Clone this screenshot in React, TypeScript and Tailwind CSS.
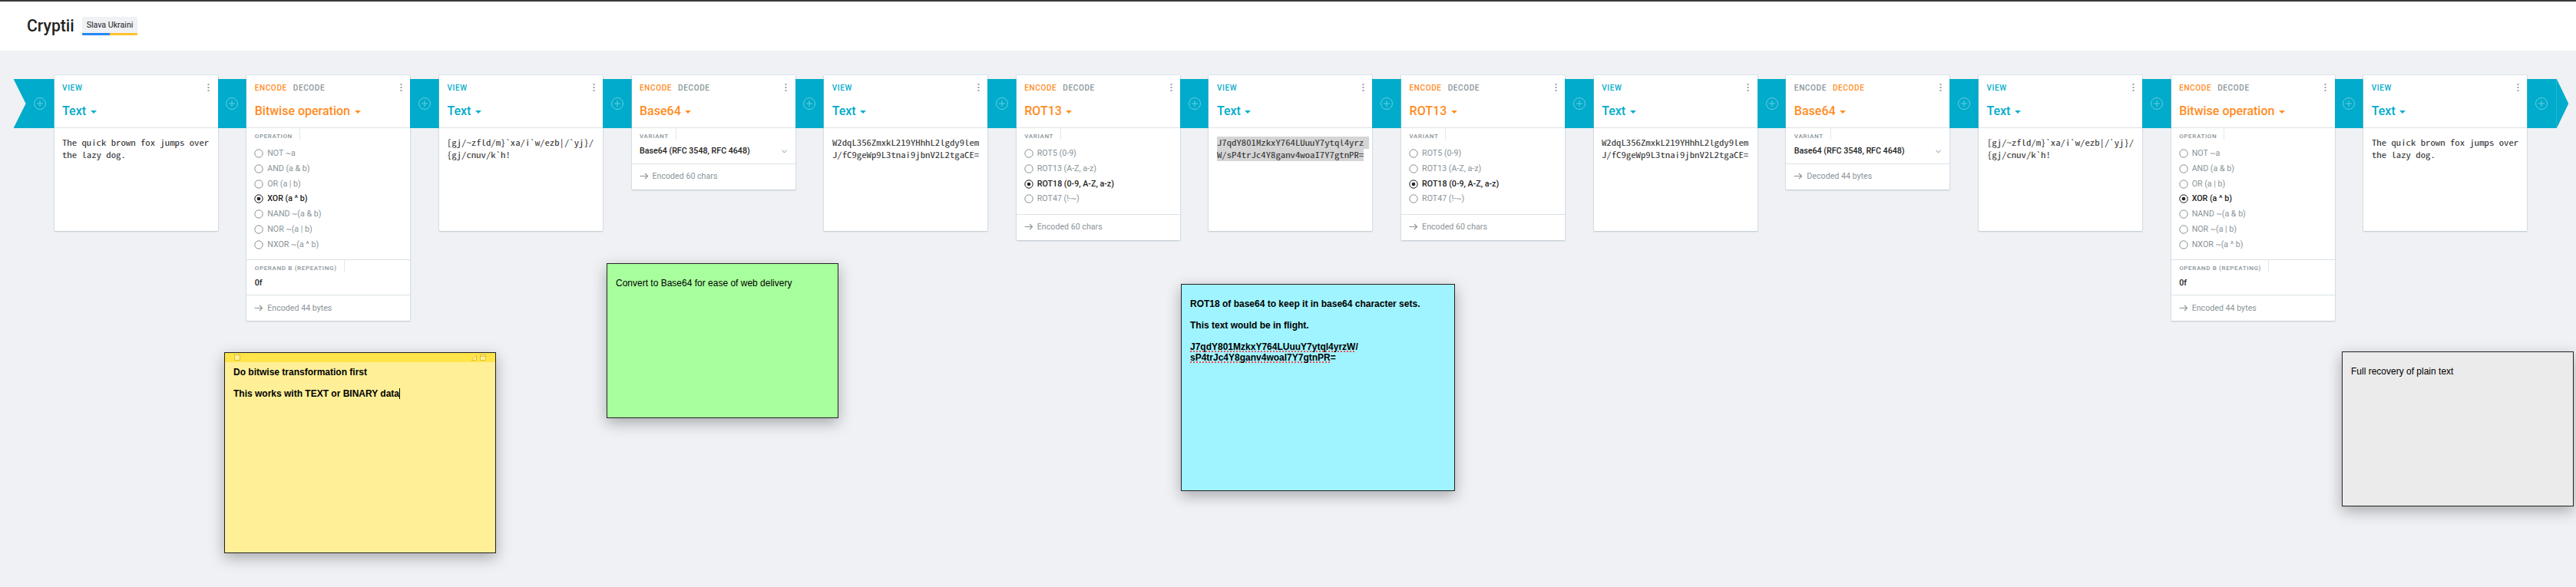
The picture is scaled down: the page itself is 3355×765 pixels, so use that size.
import React from 'react';

type View = { kind: 'view'; lines: string[]; selected?: boolean };
type Brick = {
  kind: 'brick';
  title: string;
  mode: 'ENCODE' | 'DECODE';
  label: string;
  options?: string[];
  active?: string;
  select?: string;
  operand?: string;
  status: string;
};

const bitwise: Brick = {
  kind: 'brick', title: 'Bitwise operation', mode: 'ENCODE', label: 'OPERATION',
  options: ['NOT ~a', 'AND (a & b)', 'OR (a | b)', 'XOR (a ^ b)', 'NAND ~(a & b)', 'NOR ~(a | b)', 'NXOR ~(a ^ b)'],
  active: 'XOR (a ^ b)', operand: '0f', status: 'Encoded 44 bytes',
};
const rot: Brick = {
  kind: 'brick', title: 'ROT13', mode: 'ENCODE', label: 'VARIANT',
  options: ['ROT5 (0-9)', 'ROT13 (A-Z, a-z)', 'ROT18 (0-9, A-Z, a-z)', 'ROT47 (!-~)'],
  active: 'ROT18 (0-9, A-Z, a-z)', status: 'Encoded 60 chars',
};
const base = (mode: 'ENCODE' | 'DECODE', status: string): Brick => ({
  kind: 'brick', title: 'Base64', mode, label: 'VARIANT', select: 'Base64 (RFC 3548, RFC 4648)', status,
});
const plain: View = { kind: 'view', lines: ['The quick brown fox jumps over', 'the lazy dog.'] };
const xored: View = { kind: 'view', lines: ['[gj/~zfld/m}`xa/i`w/ezb|/`yj}/', '{gj/cnuv/k`h!'] };
const b64: View = { kind: 'view', lines: ['W2dqL356ZmxkL219YHhhL2lgdy9lem', 'J/fC9geWp9L3tnai9jbnV2L2tgaCE='] };
const rotated: View = { kind: 'view', lines: ['J7qdY801MzkxY764LUuuY7ytql4yrz', 'W/sP4trJc4Y8ganv4woaI7Y7gtnPR='], selected: true };

const pipe: (View | Brick)[] = [
  plain, bitwise, xored, base('ENCODE', 'Encoded 60 chars'), b64, rot, rotated, rot, b64,
  base('DECODE', 'Decoded 44 bytes'), xored, bitwise, plain,
];

function Plus() {
  return (
    <svg className="block h-4 w-4 shrink-0" viewBox="0 0 16 16" fill="none" stroke="#66cee1" strokeWidth="1">
      <circle cx="8" cy="8" r="7.5" />
      <path d="M8 4v8M4 8h8" />
    </svg>
  );
}

function Caret() {
  return (
    <svg className="mt-[2px] ml-[5.5px] block h-1 w-2" viewBox="0 0 8 4" fill="currentColor">
      <path d="M0.4 0.1h7.2L4 3.8z" stroke="currentColor" strokeWidth="0.4" strokeLinejoin="round" />
    </svg>
  );
}

function Header({ item }: { item: View | Brick }) {
  const brick = item.kind === 'brick';
  return (
    <div className="h-[69px] border-b border-[#dce2e6] pl-[10.5px]">
      <div className="flex h-8 items-center pr-[10.3px] text-[10px] font-medium tracking-[0.62px]">
        {item.kind === 'brick' ? (
          <>
            <span className={item.mode === 'ENCODE' ? 'text-[#ff8c1f]' : 'text-[#8a9499]'}>ENCODE</span>
            <span className={item.mode === 'DECODE' ? 'ml-2 text-[#ff8c1f]' : 'ml-2 text-[#8a9499]'}>DECODE</span>
          </>
        ) : (
          <span className="text-[#00abcb]">VIEW</span>
        )}
        <svg className="ml-auto block h-3 w-[3px]" viewBox="0 0 3 12" fill="#9aa2a7">
          <rect x="0.5" y="1" width="2" height="2" />
          <rect x="0.5" y="5" width="2" height="2" />
          <rect x="0.5" y="9" width="2" height="2" />
        </svg>
      </div>
      <div className={(brick ? 'text-[#ff8c1f]' : 'text-[#00abcb]') + ' flex h-[30px] items-center text-[16px] font-medium'}>
        <span>{item.kind === 'brick' ? item.title : 'Text'}</span>
        <Caret />
      </div>
    </div>
  );
}

function Label({ children }: { children: string }) {
  return (
    <div className="flex h-[15px] w-fit items-center border-r border-[#e3e8eb] pt-[6px] pr-[9px] pl-[10.5px] text-[8px] font-medium tracking-[0.65px] whitespace-nowrap text-[#8a9499]">
      {children}
    </div>
  );
}

function Radio({ on, text }: { on: boolean; text: string }) {
  return (
    <div className={(on ? 'font-medium text-[#222]' : 'text-[#8a9499]') + ' flex h-[19.85px] items-center text-[10.67px]'}>
      <svg className="mr-[5px] block h-3 w-3" viewBox="0 0 12 12" fill="none">
        <circle cx="6" cy="6" r="5.2" stroke="currentColor" />
        {on && <circle cx="6" cy="6" r="2.3" fill="currentColor" />}
      </svg>
      {text}
    </div>
  );
}

function Card({ item }: { item: View | Brick }) {
  return (
    <div className="w-[213px] shrink-0 rounded-[1px] bg-white shadow-[0_0_0_1px_rgba(190,205,212,0.35),0_1px_2px_rgba(60,80,90,0.25)]">
      <Header item={item} />
      {item.kind === 'view' ? (
        <div className="h-[134px] pt-[11px] pl-[10.5px] font-['Noto_Sans_Mono_CJK_SC','Liberation_Mono',monospace] text-[10.67px] leading-4 text-[#333]">
          {item.lines.map((line, i) => (
            <div key={line} className={'h-4 ' + (item.selected ? (i === 0 ? 'w-[198px] bg-[#d5d5d5]' : 'w-[191.5px] bg-[#d5d5d5]') : '')}>
              <span className="block w-[160px] origin-left scale-x-[1.196] whitespace-pre">{line}</span>
            </div>
          ))}
        </div>
      ) : (
        <>
          <Label>{item.label}</Label>
          {item.options && (
            <div className="pt-[8px] pb-[9.5px] pl-[10px]">
              {item.options.map((o) => <Radio key={o} text={o} on={o === item.active} />)}
            </div>
          )}
          {item.select && (
            <div className="flex h-[31px] items-center pr-[11px] pb-[2px] pl-[10.5px] text-[10.67px] font-medium text-[#222]">
              {item.select}
              <svg className="mt-px ml-auto block h-[5px] w-[7px]" viewBox="0 0 7 5" fill="none" stroke="#8a9499">
                <path d="M0.4 0.6L3.5 4L6.6 0.6" />
              </svg>
            </div>
          )}
          {item.operand && (
            <div className="h-[46px] border-t border-[#dce2e6]">
              <Label>OPERAND B (REPEATING)</Label>
              <div className="pt-[6.5px] pl-[10.5px] text-[10.67px] leading-4 font-medium text-[#222]">{item.operand}</div>
            </div>
          )}
          <div className={(item.select ? 'pb-[2px]' : 'pb-0') + ' flex h-[34px] items-center border-t border-[#dce2e6] pl-[10px] text-[10.67px] text-[#8a9499]'}>
            <svg className="mr-[5px] mb-px block h-[9px] w-3" viewBox="0 0 12 9" fill="none" stroke="currentColor" strokeWidth="1.2">
              <path d="M0.5 4.5h10M7 1l3.5 3.5L7 8" />
            </svg>
            {item.status}
          </div>
        </>
      )}
    </div>
  );
}

export default function App() {
  return (
    <div className="relative h-[765px] w-[3355px] overflow-hidden bg-[#eff1f5] font-['Roboto',sans-serif]">
      <header className="flex h-[66px] items-center border-t-2 border-[#39363c] bg-white pl-[35px]">
        <h1 className="w-[61px] text-[21.2px] leading-6 font-medium text-[#222]">Cryptii</h1>
        <div className="ml-[11px] w-[72px] overflow-hidden rounded-[1px] bg-[#eff1f5]">
          <div className="h-[21px] text-center text-[10.67px] leading-[21px] text-[#222]">Slava Ukraini</div>
          <div className="flex h-[3px]">
            <div className="w-1/2 bg-[#2487f2]" />
            <div className="w-1/2 bg-[#ffc32e]" />
          </div>
        </div>
      </header>

      <main className="flex items-start pt-8 pl-[17.6px]">
        <div className="mt-[5px] flex h-16 w-[53px] shrink-0 items-center bg-[#00abcb] pl-[26px] [clip-path:polygon(0_0,100%_0,100%_100%,0_100%,16px_50%)]">
          <Plus />
        </div>
        {pipe.map((item, i) => (
          <React.Fragment key={i}>
            {i > 0 && (
              <div className="mt-[5px] flex h-16 w-[37.65px] shrink-0 items-center justify-center bg-[#00abcb]"><Plus /></div>
            )}
            <Card item={item} />
          </React.Fragment>
        ))}
        <div className="mt-[5px] flex h-16 w-[54px] shrink-0 items-center bg-[#00abcb] pl-[11px] [clip-path:polygon(0_0,38.6px_0,100%_50%,38.6px_100%,0_100%)]">
          <Plus />
          <div className="ml-[10.6px] h-16 w-px bg-[#26b6d2]" />
        </div>
      </main>

      <section className="font-['Liberation_Sans',sans-serif] text-[12px] leading-[14px] text-black">
        <div className="absolute top-[459px] left-[292px] h-[262px] w-[354px] border border-[#222] bg-[#fff098] font-bold shadow-[0_6px_18px_rgba(0,0,0,0.3)]">
          <div className="flex h-3 items-center bg-[#ffe44a] pr-3 pl-3">
            <div className="h-2 w-2 border border-[#dfbf35] bg-[#fff098]" />
            <svg className="ml-auto block h-2 w-2" viewBox="0 0 8 8" fill="#fff098" stroke="#dfbf35"><path d="M1 7.5L7.5 1v6.5z" /></svg>
            <svg className="ml-1 block h-2 w-2" viewBox="0 0 8 8" fill="#fff098" stroke="#dfbf35"><path d="M0.5 0.5h7v7h-7zM0.5 2.5h7" /></svg>
          </div>
          <div className="pt-[6px] pl-[11px]">
            <p>Do bitwise transformation first</p>
            <p className="mt-[14px] flex">This works with TEXT or BINARY data<span className="h-[14px] w-px bg-black" /></p>
          </div>
        </div>

        <div className="absolute top-[343px] left-[790px] h-[202px] w-[302px] border border-[#222] bg-[#a8ff9d] pt-[18px] pl-[11px] shadow-[0_6px_18px_rgba(0,0,0,0.3)]">
          Convert to Base64 for ease of web delivery
        </div>

        <div className="absolute top-[370px] left-[1538px] h-[270px] w-[357px] border border-[#222] bg-[#a0f4ff] pt-[18px] pl-[11px] font-bold shadow-[0_6px_18px_rgba(0,0,0,0.3)]">
          <p>ROT18 of base64 to keep it in base64 character sets.</p>
          <p className="mt-[14px]">This text would be in flight.</p>
          <p className="mt-[14px]">
            <span className="underline decoration-[#e8505b] decoration-dotted decoration-2 underline-offset-[1px] [text-decoration-skip-ink:none]">J7qdY801MzkxY764LUuuY7ytql4yrzW</span>/
          </p>
          <p>
            <span className="underline decoration-[#e8505b] decoration-dotted decoration-2 underline-offset-[1px] [text-decoration-skip-ink:none]">sP4trJc4Y8ganv4woaI7Y7gtnPR</span>=
          </p>
        </div>

        <div className="absolute top-[458px] left-[3050px] h-[202px] w-[302px] border border-[#222] bg-[#ebebeb] pt-[18px] pl-[11px] shadow-[0_6px_18px_rgba(0,0,0,0.3)]">
          Full recovery of plain text
        </div>
      </section>
    </div>
  );
}
